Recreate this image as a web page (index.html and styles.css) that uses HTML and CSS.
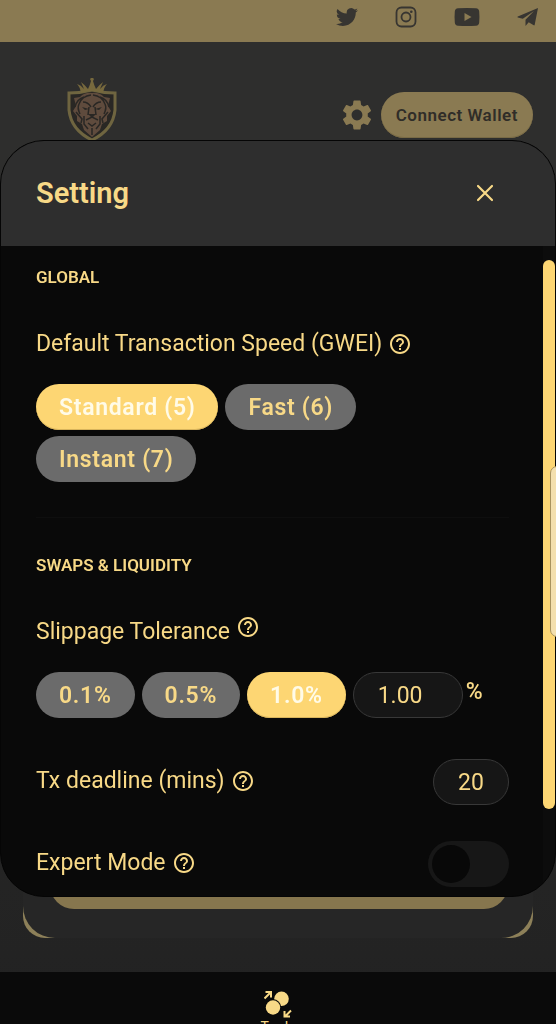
FILE: index.html
```
<!DOCTYPE html>
<html lang="en">
<head>
<meta charset="utf-8">
<meta name="viewport" content="width=device-width, initial-scale=1">
<title>Setting</title>
<link rel="stylesheet" href="styles.css">
</head>
<body>
<svg class="sprite" aria-hidden="true">
  <symbol id="help" viewBox="0 0 24 24"><path d="M11 18h2v-2h-2v2zm1-16C6.480 2 2 6.480 2 12s4.480 10 10 10 10-4.480 10-10S17.520 2 12 2zm0 18c-4.410 0-8-3.590-8-8s3.590-8 8-8 8 3.590 8 8-3.590 8-8 8zm0-14c-2.210 0-4 1.790-4 4h2c0-1.100.9-2 2-2s2 .9 2 2c0 2-3 1.750-3 5h2c0-2.250 3-2.500 3-5 0-2.210-1.790-4-4-4z"/></symbol>
</svg>
<div class="app">
  <nav class="social" aria-label="Social">
    <a href="#" aria-label="Twitter"><svg width="22" height="22" viewBox="0 0 24 24"><path d="M23.950 4.570a10 10 0 0 1-2.820.77 4.960 4.960 0 0 0 2.160-2.720c-.95.55-2 .95-3.130 1.180a4.920 4.920 0 0 0-8.380 4.480C7.690 8.090 4.070 6.130 1.640 3.160a4.920 4.920 0 0 0 1.520 6.570 4.900 4.900 0 0 1-2.230-.61v.06a4.920 4.920 0 0 0 3.950 4.830 5 5 0 0 1-2.210.08 4.940 4.940 0 0 0 4.600 3.420A9.870 9.870 0 0 1 0 19.540a14 14 0 0 0 7.550 2.210c9.050 0 14-7.500 14-13.980l-.02-.64a9.900 9.900 0 0 0 2.420-2.560z"/></svg></a>
    <a href="#" aria-label="Instagram"><svg width="22" height="22" viewBox="0 0 22 22"><rect x="1.500" y="1.500" width="19" height="19" rx="5" fill="none" stroke="currentColor" stroke-width="1.800"/><circle cx="11" cy="11" r="4.500" fill="none" stroke="currentColor" stroke-width="1.800"/><circle cx="16.300" cy="5.700" r="1.300"/></svg></a>
    <a href="#" aria-label="YouTube"><svg width="26" height="20" viewBox="0 0 26 20"><path fill-rule="evenodd" d="M4 1.300Q13 .7 22 1.300q3 .2 3.200 3.200.5 5.500 0 11-.2 3-3.200 3.200-9 .6-18 0-3-.2-3.200-3.200-.5-5.500 0-11Q1 1.500 4 1.300zM10.500 6v8l7-4z"/></svg></a>
    <a href="#" aria-label="Telegram"><svg width="22" height="20" viewBox="0 0 22 20"><path d="M21 1 .8 9.400c-.5.3-.4.800 0 1l5 1.400L17 4 8.500 12.700V19l3.200-3.700 5 3c.5.200.9 0 1-.6z"/></svg></a>
  </nav>
  <header class="header">
    <a class="logo" href="#" aria-label="Home"><svg width="50" height="74" viewBox="0 0 50 74">
      <path d="M2 15Q14 15 25 12Q36 15 48 15V32Q46 52 25 62Q4 52 2 32Z" fill="#292724" stroke="#6f6540" stroke-width="3"/>
      <path d="M14 15Q13 9 10 6q4 1 7 5l-3-7q4 3 7 7 2-4 3-8l-1-2 2-2 2 2-1 2q1 4 3 8 3-4 7-7l-3 7q3-4 7-5-3 3-4 9-11-4-22 0z" fill="#77693d"/>
      <path d="M25 15q-7-1-12 4l-6 1 2 8-3 5 4 5v5l5 3 2 6 8 7 8-7 2-6 5-3v-5l4-5-3-5 2-8-6-1q-5-5-12-4z" fill="#5f4b3d"/>
      <g fill="none" stroke="#292724" stroke-width="1.500">
        <path d="M24 17q-9 1-12 9-2 4 1 10M26 17q9 1 12 9 2 4-1 10M17 19q-7 2-9 10M33 19q7 2 9 10M9 34l6 7-1 4M41 34l-6 7 1 4M17 38v8l4 5M33 38v8l-4 5"/>
        <path d="M16 24q5 0 8 5M34 24q-5 0-8 5M22 29l-1 8M28 29l1 8M19 42l6-3 6 3M21 45l4 3 4-3M25 50v7"/>
      </g>
      <path d="M21 36h8l-4 4zM15 29l7 2-4 1zM35 29l-7 2 4 1z" fill="#292724"/>
    </svg></a>
    <button class="cog" type="button" aria-label="Settings"><svg width="36" height="36" viewBox="0 0 24 24"><path d="M19.140 12.940c.04-.3.060-.61.060-.94 0-.32-.02-.64-.07-.94l2.030-1.580c.18-.14.230-.41.120-.61l-1.920-3.320c-.12-.22-.37-.29-.59-.22l-2.390.96c-.5-.38-1.030-.7-1.620-.94l-.36-2.540c-.04-.24-.24-.41-.48-.41h-3.840c-.24 0-.43.170-.47.410l-.36 2.540c-.59.240-1.130.570-1.620.940l-2.390-.96c-.22-.08-.47 0-.59.220L2.740 8.870c-.12.210-.08.470.120.610l2.030 1.580c-.05.300-.09.630-.09.940s.020.640.070.940l-2.030 1.580c-.18.140-.23.410-.12.610l1.920 3.320c.12.220.370.290.590.220l2.390-.96c.5.380 1.030.7 1.620.94l.36 2.540c.05.240.240.410.480.410h3.840c.24 0 .44-.17.470-.41l.36-2.540c.59-.24 1.130-.56 1.620-.94l2.390.96c.22.080.47 0 .59-.22l1.920-3.320c.12-.22.070-.47-.12-.61l-2.010-1.580zM12 15.600c-1.980 0-3.600-1.620-3.600-3.600s1.620-3.600 3.600-3.600 3.600 1.620 3.600 3.600-1.620 3.600-3.600 3.600z"/></svg></button>
    <button class="connect" type="button">Connect Wallet</button>
  </header>
  <main class="main">
    <div class="card-edge"><section class="card"><button class="action" type="button" aria-label="Swap"></button></section></div>
  </main>
  <nav class="tabs" aria-label="Main">
    <a class="tab" href="#"><svg width="28" height="28" viewBox="0 0 28 28"><circle cx="17.500" cy="8.800" r="7.300"/><circle cx="9" cy="17.500" r="8.300" fill="#0a0a0a"/><circle cx="9" cy="17.500" r="7.200"/><g fill="none" stroke="currentColor" stroke-width="2"><path d="M.5 8.500 6.500 2.500M1.500 2H7v5.500M27 20.500l-6 6M20.500 21v5.500H26"/></g></svg>
      <span>Trade</span></a>
  </nav>
</div>

<div class="overlay">
  <div class="modal" role="dialog" aria-labelledby="modal-title">
    <div class="modal-head">
      <h1 id="modal-title">Setting</h1>
      <button class="close" type="button" aria-label="Close"><svg width="18" height="18" viewBox="0 0 18 18"><path d="M2 2l14 14M16 2 2 16" fill="none" stroke="currentColor" stroke-width="2.200" stroke-linecap="round"/></svg></button>
    </div>
    <div class="modal-body">
      <div class="content">
        <section class="group">
          <h2>GLOBAL</h2>
          <div class="label">Default Transaction Speed (GWEI) <svg class="help"><use href="#help"/></svg></div>
          <div class="pills">
            <button class="pill on" type="button">Standard (5)</button>
            <button class="pill" type="button">Fast (6)</button>
            <button class="pill" type="button">Instant (7)</button>
          </div>
        </section>
        <section class="group">
          <h2>SWAPS &amp; LIQUIDITY</h2>
          <div class="label raised"><label for="slippage">Slippage Tolerance</label> <svg class="help"><use href="#help"/></svg></div>
          <div class="pills">
            <button class="pill" type="button">0.1%</button>
            <button class="pill" type="button">0.5%</button>
            <button class="pill on" type="button">1.0%</button>
            <input class="field slip" id="slippage" type="text" inputmode="decimal" value="1.00">
            <span class="unit">%</span>
          </div>
          <div class="row deadline-row">
            <div class="label"><label for="deadline">Tx deadline (mins)</label> <svg class="help"><use href="#help"/></svg></div>
            <input class="field mins" id="deadline" type="text" inputmode="numeric" value="20">
          </div>
          <div class="row">
            <div class="label"><label for="expert">Expert Mode</label> <svg class="help"><use href="#help"/></svg></div>
            <input class="switch" id="expert" type="checkbox" role="switch">
          </div>
        </section>
      </div>
      <div class="track"><div class="thumb"></div></div>
    </div>
  </div>
</div>
<div class="edge-handle"></div>
</body>
</html>
```
FILE: styles.css
```
* { box-sizing: border-box; }
html, body { height: 100%; }
body {
  margin: 0;
  overflow: hidden;
  background: #232323;
  color: #f8d987;
  font-family: Roboto, "Liberation Sans", sans-serif;
}
button, input { margin: 0; border: 0; font: inherit; color: inherit; }
button { padding: 0; background: none; }
svg { display: block; flex: none; fill: currentColor; }
a { color: inherit; text-decoration: none; }
h1, h2 { margin: 0; font-weight: 600; }
.sprite { position: absolute; width: 0; height: 0; }

.app {
  display: flex;
  flex-direction: column;
  height: 100vh;
  overflow: hidden;
  background: linear-gradient(#2e2e2d, #2e2e2d 20%, #222222);
}
.social {
  display: flex;
  flex: none;
  align-items: center;
  justify-content: flex-end;
  gap: 37px;
  height: 42px;
  padding: 0 17px 8px 0;
  background: #8a7a52;
  color: #373531;
}
.header {
  display: flex;
  flex: none;
  align-items: center;
  height: 146px;
  padding: 0 23px 0 67px;
  color: #8a7a52;
}
.logo { flex: 1; }
.cog { margin-right: 6px; }
.connect {
  height: 46px;
  padding: 0 15px;
  border-radius: 23px;
  background: #8a7a52;
  box-shadow: inset 0 -1px 0 #786a45;
  color: #302d28;
  font-size: 17px;
  font-weight: 600;
  letter-spacing: 0.03em;
}
.main {
  display: flex;
  flex: 1;
  flex-direction: column;
  justify-content: flex-end;
  padding: 0 23px 34px;
}
.card-edge { border-radius: 22px; background: #8d8059; }
.card { padding: 400px 25px 29px 27px; border-radius: 32px; background: #262626; }
.action {
  display: block;
  width: 100%;
  height: 48px;
  border-radius: 24px;
  background: #86764e;
}
.tabs {
  display: flex;
  flex: none;
  justify-content: center;
  height: 52px;
  padding-top: 18px;
  overflow: hidden;
  background: #0a0a0a;
}
.tab {
  display: flex;
  flex-direction: column;
  align-items: center;
  font-size: 14px;
  line-height: 18px;
}

.overlay {
  position: fixed;
  inset: 0;
  display: flex;
  padding: 140px 0 127px;
}
.modal {
  display: flex;
  flex: 1;
  flex-direction: column;
  overflow: hidden;
  border: 1px solid #050505;
  border-radius: 44px;
  background: #090909;
}
.modal-head {
  display: flex;
  flex: none;
  align-items: center;
  justify-content: space-between;
  height: 105px;
  padding: 0 60px 2px 35px;
  background: #2e2e2e;
}
.modal-head h1 { font-size: 29px; line-height: 32px; }
.close { padding: 1px; }
.modal-body { display: flex; flex: 1; min-height: 0; }
.content {
  flex: 1;
  min-width: 0;
  padding: 17px 34px 0 35px;
  overflow: hidden;
}
.group + .group {
  margin-top: 35px;
  padding-top: 33px;
  border-top: 1px solid #0e0e0e;
}
h2 { font-size: 17px; line-height: 28px; }
.label {
  display: flex;
  align-items: center;
  gap: 6px;
  font-size: 23px;
  line-height: 34px;
}
h2 + .label { margin: 36px 0 23px; }
.help { width: 24px; height: 24px; }
.raised { align-items: flex-start; }
.pills { display: flex; flex-wrap: wrap; gap: 6px 7px; }
.pill {
  height: 46px;
  padding: 0 23px;
  border-radius: 23px;
  background: #6b6b6b;
  font-size: 23px;
  font-weight: 600;
  letter-spacing: 0.03em;
}
.pill.on {
  background: #fdd673;
  box-shadow: inset 0 -1px 0 #d8b45c;
  color: #fffbe8;
}
.field {
  height: 46px;
  padding: 0 24px;
  border: 1px solid #383838;
  border-radius: 23px;
  background: #161616;
  font-size: 23px;
}
.slip { width: 110px; }
.mins { width: 76px; }
.unit { margin-left: -4px; font-size: 23px; font-weight: 500; line-height: 40px; }
.row {
  display: flex;
  align-items: center;
  justify-content: space-between;
  margin-top: 36px;
}
.deadline-row { margin-top: 41px; }
.row .label { padding-bottom: 2px; }
.switch {
  display: flex;
  align-items: center;
  width: 81px;
  height: 46px;
  padding: 4px;
  appearance: none;
  border-radius: 23px;
  background: #171717;
}
.switch::before {
  content: "";
  width: 38px;
  height: 38px;
  border-radius: 50%;
  background: #080808;
}
.switch:checked::before { margin-left: auto; }
.track { width: 12px; padding: 14px 0 87px; background: #0c0c0c; }
.thumb { height: 100%; border-radius: 6px; background: #fdd673; }
.edge-handle {
  position: fixed;
  top: 466px;
  right: -8px;
  width: 14px;
  height: 171px;
  border: 1px solid #a8935f;
  border-radius: 7px;
  background: #f3dfae;
}
```
